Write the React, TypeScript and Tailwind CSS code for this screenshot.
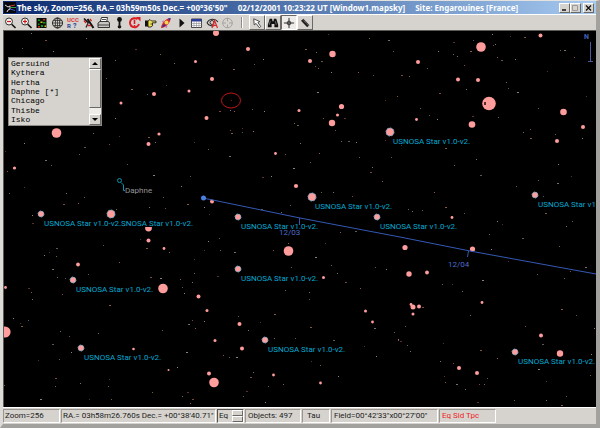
import type { ReactNode } from 'react';

const UI_FONT = "font-['Roboto','Liberation_Sans',sans-serif]";
const RAISED = 'border border-t-white border-l-white border-r-[#6b6966] border-b-[#6b6966]';

const asteroids = ['Gersuind', 'Kythera', 'Hertha', 'Daphne [*]', 'Chicago', 'Thisbe', 'Isko'];

// x, y, radius
const stars = [
  [216, 33, 3], [248, 49, 2], [332.5, 54, 3.2], [310, 61, 2], [195.5, 61.5, 1.5], [212, 79, 2],
  [189, 91, 1.5], [154, 94, 2], [121, 103, 1.5], [206.5, 118, 2], [299, 110.5, 1.5], [341.5, 106.5, 2.6],
  [337.5, 115, 1.5], [332, 123, 3.2], [481, 47, 4.8], [540.5, 35.5, 2], [418, 62, 2], [458, 79.5, 2],
  [478, 80, 2], [489, 103.5, 6.8], [472, 124.5, 3.3], [563.5, 112, 3.3], [583, 127, 2], [557, 141, 2],
  [416.5, 119.5, 1.4], [56.5, 133, 4.8], [14.5, 168, 1.6], [148.5, 144, 2], [159, 134, 1.6],
  [275.5, 153.5, 1.4], [296, 186, 2.1], [212, 201.5, 2], [148.5, 228, 3.4], [148.5, 240.5, 2],
  [164, 248.5, 1.4], [78, 264.5, 1.9], [163, 288.5, 4.8], [198.5, 296.5, 2], [5.5, 287.5, 1.4],
  [5, 332, 5.6], [133.5, 349, 1.3], [168.5, 370, 1], [288.5, 251, 4.8], [323.5, 277.5, 1.5],
  [207, 310.5, 1.5], [239.5, 324, 2], [365.5, 311, 1.5], [372.5, 322, 1.4], [215, 340.5, 1.5],
  [242, 348.5, 2], [209, 373.5, 2], [214, 382.5, 4.8], [273.5, 375, 1.4], [320.5, 383, 1.4],
  [452, 217.5, 1.4], [405, 247.5, 2.6], [472.5, 249, 2.6], [409, 274, 2.7], [427, 272.5, 1.9],
  [411, 304.5, 1.4], [413, 307, 2.5], [419, 306.5, 2], [413, 314, 1.5], [482, 302.5, 1.4],
  [541, 335.5, 2], [560, 353.5, 3.2], [459, 368, 2], [477, 373, 2],
];

const faint = [
  [31, 33], [45, 40], [86, 38], [22, 48], [53, 51], [135, 49], [160, 54], [115, 60], [106, 78], [131, 89],
  [147, 94], [115, 118], [119, 136], [148, 137], [155, 142], [109, 144], [93, 133], [84, 147], [24, 143],
  [5, 151], [79, 154], [45, 160], [51, 165], [7, 171], [127, 164], [153, 175], [24, 187], [9, 193], [66, 193],
  [63, 204], [78, 203], [84, 197], [32, 215], [32, 223], [116, 209], [149, 207], [165, 208], [187, 204],
  [163, 197], [181, 186], [140, 239], [146, 248], [169, 252], [103, 245], [119, 262], [56, 248], [44, 255],
  [49, 252], [56, 256], [52, 269], [88, 274], [57, 277], [65, 278], [160, 278], [194, 259], [194, 273],
  [192, 282], [150, 277], [180, 279], [182, 287], [184, 293], [28, 288], [31, 292], [32, 299], [62, 294],
  [109, 305], [28, 320], [13, 318], [20, 323], [21, 326], [60, 331], [69, 336], [98, 333], [52, 344],
  [71, 352], [38, 360], [59, 359], [188, 324], [192, 320], [195, 328], [162, 330], [186, 352], [109, 379],
  [108, 386], [80, 383], [55, 378], [55, 386], [4, 385], [177, 367], [187, 392], [152, 392], [174, 63],
  [221, 59], [233, 69], [254, 64], [263, 59], [166, 85], [305, 49], [316, 52], [315, 66], [318, 68],
  [321, 61], [331, 72], [328, 34], [369, 38], [388, 40], [393, 51], [358, 72], [373, 75], [317, 92],
  [385, 100], [397, 96], [230, 110], [219, 111], [234, 111], [252, 109], [264, 111], [344, 118], [323, 118],
  [294, 123], [230, 130], [231, 133], [242, 132], [253, 131], [242, 128], [297, 125], [300, 143],
  [335, 130], [341, 141], [348, 141], [356, 142], [194, 142], [208, 149], [229, 156], [285, 154],
  [319, 153], [310, 162], [293, 168], [385, 140], [359, 157], [372, 167], [370, 172], [382, 181],
  [190, 176], [271, 176], [262, 177], [321, 192], [333, 192], [352, 196], [345, 204], [290, 205],
  [204, 207], [209, 214], [261, 209], [281, 212], [219, 238], [340, 232], [355, 231], [208, 241],
  [204, 250], [220, 250], [234, 252], [273, 250], [288, 243], [291, 267], [315, 257], [325, 243],
  [331, 265], [337, 273], [345, 282], [360, 288], [375, 267], [386, 269], [217, 276], [285, 290],
  [309, 292], [309, 299], [274, 314], [238, 316], [204, 321], [260, 322], [310, 327], [248, 330],
  [295, 338], [274, 338], [333, 340], [376, 356], [364, 346], [394, 332], [374, 328], [398, 340],
  [223, 355], [229, 357], [236, 357], [311, 361], [320, 365], [253, 372], [250, 377], [283, 384],
  [268, 386], [338, 376], [246, 391], [408, 209], [412, 211], [422, 210], [445, 207], [464, 213],
  [497, 221], [502, 224], [545, 213], [566, 226], [572, 221], [489, 234], [522, 238], [491, 249],
  [508, 261], [559, 246], [585, 267], [570, 271], [564, 278], [537, 274], [482, 280], [452, 284],
  [442, 284], [462, 291], [422, 307], [470, 315], [405, 326], [398, 339], [400, 341], [407, 345],
  [410, 351], [525, 326], [561, 309], [576, 315], [594, 328], [443, 343], [480, 350], [440, 361],
  [453, 363], [497, 358], [542, 344], [591, 354], [444, 376], [445, 382], [456, 384], [479, 384],
  [484, 384], [487, 378], [538, 369], [546, 381], [590, 375], [465, 389], [401, 75], [409, 76],
  [427, 68], [438, 51], [453, 42], [453, 54], [457, 56], [464, 65], [470, 51], [473, 40], [492, 34],
  [510, 36], [524, 37], [495, 44], [493, 45], [497, 57], [501, 60], [515, 59], [547, 71], [560, 50],
  [564, 50], [574, 57], [506, 82], [508, 88], [517, 92], [586, 96], [538, 108], [466, 89], [439, 93],
  [420, 108], [429, 115], [437, 119], [472, 116], [498, 117], [523, 132], [530, 129], [530, 138],
  [555, 134], [582, 138], [401, 145], [445, 148], [476, 159], [391, 157], [454, 165], [480, 175],
  [558, 164], [571, 176], [538, 180], [557, 183], [516, 186], [434, 192], [543, 196], [40, 399],
  [89, 399], [111, 399], [182, 396], [192, 399], [190, 403], [243, 396], [265, 402], [477, 402],
  [514, 400], [546, 400], [566, 396], [561, 405],
];

const faintColors = ['#727272', '#7a4a42', '#8a5a4c', '#5a5a5a', '#94807a', '#5a3030', '#7a5e3a'];

// each label blanks the stars that lie under it
const catalogStars = [
  { x: 390, y: 132, r: 4 },
  { x: 535, y: 195, r: 3, label: 'USNOSA Star v1' },
  { x: 312, y: 197, r: 4 },
  { x: 377, y: 217, r: 3 },
  { x: 238, y: 217, r: 3 },
  { x: 111, y: 214, r: 4, label: 'SNOSA Star v1.0-v2.', labelX: 121 },
  { x: 41, y: 214, r: 3 },
  { x: 73, y: 280, r: 3 },
  { x: 81, y: 348, r: 3 },
  { x: 238, y: 269, r: 3 },
  { x: 265, y: 340, r: 3 },
  { x: 515, y: 352, r: 3 },
];

const Icon = ({ children }: { children: ReactNode }) => (
  <svg viewBox="0 0 15 14" className="block h-[14px] w-[15px]" fill="none" aria-hidden="true">
    {children}
  </svg>
);

const Magnifier = ({ plus = false }) => (
  <Icon>
    <circle cx="6" cy="5.5" r="3.5" fill="#f4f2ee" stroke="#333" />
    <path d="M8.7 8.2 12.5 12" stroke="#111" strokeWidth="1.6" />
    <path d={plus ? 'M4 5.5h4M6 3.5v4' : 'M4 5.5h4'} stroke="#d01818" strokeWidth="1.2" />
  </Icon>
);

const tools: { label: string; icon: ReactNode }[] = [
  { label: 'Zoom out', icon: <Magnifier /> },
  { label: 'Zoom in', icon: <Magnifier plus /> },
  {
    label: 'Image',
    icon: (
      <Icon>
        <path d="M2.5 2h10v10h-10z" fill="#0a0f06" />
        <path d="M4 3.5h2v1.5H4zM9 6h2.5v1.5H9zM7 9h2v2H7zM4 7.5h1.5V9H4z" fill="#0b9c1c" />
        <path d="M9 3h2v1.5H9zM4 10h2v1.5H4z" fill="#d02a12" />
        <path d="M6.5 5.5h2V7h-2zM10.5 9.5H12V11h-1.500z" fill="#d8c21e" />
      </Icon>
    ),
  },
  {
    label: 'Grid',
    icon: (
      <Icon>
        <circle cx="7.5" cy="7" r="5" stroke="#222" />
        <ellipse cx="7.5" cy="7" rx="2.2" ry="5" stroke="#222" strokeWidth=".8" />
        <path d="M2.5 7h10M7.5 2v10M3.5 4.5h8M3.5 9.5h8" stroke="#222" strokeWidth=".7" />
      </Icon>
    ),
  },
  {
    label: 'Catalogues',
    icon: (
      <Icon>
        <text x="2" y="6" fontSize="6" fontWeight="700" fill="#d83a3a" className={UI_FONT}>UCC</text>
        <text x="2" y="12" fontSize="6" fontWeight="700" fill="#26409c" className={UI_FONT}>R</text>
        <text x="8" y="12" fontSize="7" fontWeight="700" fill="#26409c" className={UI_FONT}>?</text>
      </Icon>
    ),
  },
  {
    label: 'Telescope',
    icon: (
      <Icon>
        <path d="M3 2.5 7 6.5" stroke="#111" strokeWidth="1.6" />
        <path d="M6.5 3 12.5 12" stroke="#111" strokeWidth="2" />
        <path d="M8 5 5 11.5" stroke="#222" strokeWidth="1.3" />
        <path d="M3 4.5 5 7M9 3l1.5 2M6.5 9.5H10" stroke="#d02020" strokeWidth="1.3" />
      </Icon>
    ),
  },
  {
    label: 'Print',
    icon: (
      <Icon>
        <path d="M4 6.5 5.5 1.5h6L10.5 6.5" fill="#fff" stroke="#222" strokeWidth=".9" />
        <path d="M2 7 4 5.5h8.500L13.5 7v4.5H2z" fill="#c8c6c2" stroke="#222" strokeWidth=".9" />
        <path d="M2 9h11M6 3.5h4" stroke="#222" strokeWidth=".8" />
      </Icon>
    ),
  },
  {
    label: 'Mark',
    icon: (
      <Icon>
        <circle cx="7.5" cy="3.5" r="2.4" fill="#111" />
        <path d="M7.5 5v4" stroke="#111" strokeWidth="1.8" />
        <circle cx="7.5" cy="10.7" r="1.8" fill="#111" />
      </Icon>
    ),
  },
  {
    label: 'Refresh',
    icon: (
      <Icon>
        <path d="M10.5 3.2A4.600 4.600 0 1 0 12 8" stroke="#dc1c24" strokeWidth="1.9" />
        <path d="M9 1h4.500v4.500z" fill="#dc1c24" />
        <path d="M7.5 3.5V8M7.5 9v1.8" stroke="#dc1c24" strokeWidth="1.6" />
      </Icon>
    ),
  },
  {
    label: 'Point',
    icon: (
      <Icon>
        <path d="M2 4.5h3v6H2z" fill="#111" />
        <path d="M5 5 7 3.5 8.5 5H13v1.8H9.500v3L8 11H5z" fill="#f0e04a" stroke="#222" strokeWidth=".9" />
        <path d="M7.5 8h2.500" stroke="#222" strokeWidth=".8" />
      </Icon>
    ),
  },
  {
    label: 'Launch',
    icon: (
      <Icon>
        <path d="M3 12C3 8 8 2 12.5 2 13 6 8 12 3 12z" fill="#d8282c" />
        <path d="M3.5 11.5 6 8l1.8 1.500z" fill="#2638a0" />
        <path d="M10 2.5 12.5 2 12 4.500z" fill="#2638a0" />
        <circle cx="8.5" cy="6.5" r="2" fill="#f2d84c" />
        <path d="M4 6 6 5M8 12 9 10" stroke="#c87ab8" strokeWidth="1.3" />
      </Icon>
    ),
  },
  { label: 'Run', icon: <Icon><path d="M5.5 2.5v9L10.5 7z" fill="#111" /></Icon> },
  {
    label: 'Table',
    icon: (
      <Icon>
        <path d="M2.5 3h10v8.500h-10z" fill="#fff" stroke="#333" strokeWidth=".9" />
        <path d="M2.5 3h10v2.500h-10z" fill="#2a3c9c" />
        <path d="M5 5v6.500M7.5 5v6.500M10 5v6.500M2.5 7.5h10M2.5 9.5h10" stroke="#8a8a90" strokeWidth=".6" />
      </Icon>
    ),
  },
  {
    label: 'Visibility',
    icon: (
      <Icon>
        <path d="M2 7C4 2.5 10 2 13 6M2 7c2 3 6 3.5 8 2" stroke="#222" strokeWidth="1.1" />
        <circle cx="7" cy="6.5" r="2" stroke="#333" />
        <path d="M7 12 9.5 4.5 12.5 12M8 9.5h4" stroke="#dc2828" strokeWidth="1.2" />
      </Icon>
    ),
  },
  {
    label: 'Center',
    icon: (
      <Icon>
        <circle cx="7.5" cy="7" r="4.8" stroke="#a5a3a0" />
        <path d="M7.5 2v3.500M7.5 8.5V12M2.5 7H6M9 7h3.500" stroke="#a5a3a0" />
      </Icon>
    ),
  },
];

const modes: { label: string; pressed?: boolean; icon: ReactNode }[] = [
  {
    label: 'Select',
    icon: (
      <Icon>
        <path d="M4 2.5 4.5 9 6.5 7.5 10 12 11.5 10.8 8.5 6.5 10.5 5.500z" fill="#fff" stroke="#333" strokeWidth=".9" />
      </Icon>
    ),
  },
  {
    label: 'Find',
    icon: (
      <Icon>
        <path d="M4 2.5h2.500L7 5h1l.5-2.500H11L13 9v2.500H9V8H6v3.500H2V9z" fill="#111" />
        <path d="M4.5 5 3.5 9M10 5l1 4" stroke="#aaa" strokeWidth=".6" />
      </Icon>
    ),
  },
  {
    label: 'Crosshair',
    pressed: true,
    icon: (
      <Icon>
        <path d="M7.5 1.5v11M2 7h11" stroke="#222" strokeWidth="1" />
        <circle cx="7.5" cy="7" r="2" stroke="#222" strokeWidth=".9" />
      </Icon>
    ),
  },
  {
    label: 'Measure',
    icon: (
      <Icon>
        <path d="M4.5 3.5 11 10.5" stroke="#222" strokeWidth="3.4" />
        <path d="M5.5 3.5 11.5 10" stroke="#aaa" strokeWidth=".9" strokeDasharray="1 1" />
      </Icon>
    ),
  },
];

const Sky = () => (
  <svg viewBox="4 31 592 376" className={`block h-auto w-full bg-black ${UI_FONT}`} role="img" aria-label="Sky map">
    {faint.map(([x, y], i) => (
      <rect key={i} x={x} y={y} width={i % 4 === 1 ? 2 : 1} height="1" fill={faintColors[i % faintColors.length]} />
    ))}
    {stars.map(([x, y, r], i) => (
      <circle key={i} cx={x} cy={y} r={r} fill="#ff9c9c" />
    ))}
    <path d="M484 102h2v3h-2z" fill="#5a2a2a" />
    {catalogStars.map(({ x, y, r, label = 'USNOSA Star v1.0-v2.', labelX = x + 3 }, i) => (
      <g key={i}>
        <rect x={x + 3} y={y + 5} width="74" height="8" fill="#000" />
        <circle cx={x} cy={y} r={r} fill="#ff9c9c" />
        <circle cx={x} cy={y} r={r} stroke="#62a8c8" strokeDasharray="2 1" fill="none" />
        <text x={labelX} y={y + 12} fontSize="8" fill="#06a8d0">{label}</text>
      </g>
    ))}
    <polyline points="203,198 300,218 400,237 470,251 596,274" stroke="#3558b4" fill="none" />
    <path d="M299.5 218v7M468.5 251l-1 6" stroke="#3558b4" />
    <circle cx="203.5" cy="198" r="2.5" fill="#4a80e0" />
    <text x="279" y="235" fontSize="8" fill="#4c6ccc">12/03</text>
    <text x="448" y="267" fontSize="8" fill="#4c6ccc">12/04</text>
    <ellipse cx="231" cy="100.5" rx="9.5" ry="7.5" stroke="#c41414" fill="none" />
    <rect x="231" y="100" width="1" height="1" fill="#8a1010" />
    <circle cx="119.5" cy="180.5" r="2" stroke="#0896ac" fill="none" />
    <path d="M121 182.5 123.5 185v5.500h1.500" stroke="#0896ac" fill="none" />
    <text x="125" y="193" fontSize="8" fill="#969696">Daphne</text>
    <text x="584" y="39" fontSize="7" fontWeight="700" fill="#4460b8">N</text>
    <path d="M590.5 42v20M588 61.5h5" stroke="#4c5a9c" fill="none" />
  </svg>
);

const ObjectList = () => (
  <div className="absolute top-[26px] left-1 flex h-[69px] w-[94px] border border-[#8c8a86] bg-[#d6d3ce]">
    <ul className="flex min-w-0 flex-1 flex-col justify-between overflow-hidden pt-px pb-px pl-0.5" role="listbox" aria-label="Objects">
      {asteroids.map((name) => (
        <li key={name} role="presentation" className="h-[9px]">
          <button
            role="option"
            aria-selected={name === 'Daphne [*]'}
            className="block w-full text-left font-['Liberation_Mono',monospace] text-[8px] leading-[9px] text-black"
          >
            {name}
          </button>
        </li>
      ))}
    </ul>
    <div className="flex w-3 flex-col bg-[#efedea]">
      <button aria-label="Scroll up" className={`flex h-[11px] items-center justify-center bg-[#d6d3ce] ${RAISED}`}>
        <svg viewBox="0 0 6 3" className="h-[3px] w-[6px]"><path d="M0 3h6L3 0z" /></svg>
      </button>
      <div className={`h-[39px] bg-[#d6d3ce] ${RAISED}`} />
      <button aria-label="Scroll down" className={`mt-auto flex h-[11px] items-center justify-center bg-[#d6d3ce] ${RAISED}`}>
        <svg viewBox="0 0 6 3" className="h-[3px] w-[6px]"><path d="M0 0h6L3 3z" /></svg>
      </button>
    </div>
  </div>
);

const StatusCell = ({ width, className = '', children }: { width: string; className?: string; children: ReactNode }) => (
  <div className={`h-[14px] shrink-0 overflow-hidden border border-t-[#99968f] border-l-[#99968f] border-r-white border-b-white whitespace-nowrap ${width} ${className}`}>
    {children}
  </div>
);

const StatusBar = () => (
  <footer className={`flex h-[17px] items-center gap-px border-t border-white bg-[#d6d3ce] text-[8px] leading-[12px] text-[#1c1c1c] ${UI_FONT}`}>
    <StatusCell width="w-[57px]" className="pl-px">Zoom=256</StatusCell>
    <StatusCell width="w-[155px]" className="pl-px">RA.= 03h58m26.760s Dec.= +00°38'40.71"</StatusCell>
    <div className="flex h-[14px] w-[27px] shrink-0 border border-t-[#55534f] border-l-[#55534f] border-r-white border-b-white">
      <input aria-label="Coordinate system" defaultValue="Eq" className="w-[14px] bg-transparent pl-px outline-none" />
      <div className="flex flex-1 flex-col">
        <button aria-label="Next" className={`h-[6px] ${RAISED}`} />
        <button aria-label="Previous" className={`h-[6px] ${RAISED}`} />
      </div>
    </div>
    <StatusCell width="w-[56px]" className="pl-0.5">Objects: 497</StatusCell>
    <StatusCell width="w-[28px]" className="pl-1">Tau</StatusCell>
    <StatusCell width="w-[107px]" className="pl-0.5">Field=00°42'33"x00°27'00"</StatusCell>
    <StatusCell width="w-[57px]" className="pl-0.5 text-[#f01c24]">Eq Sid Tpc</StatusCell>
  </footer>
);

const App = () => {
  return (
    <main className="w-full border-t border-r-4 border-b-4 border-l-[3px] border-t-[#e4e2de] border-r-[#a3a19d] border-b-[#a3a19d] border-l-[#dddbd7] bg-[#d6d3ce]">
      <header className="flex h-[13px] items-center bg-linear-to-r from-[#0c2a70] to-[#a6caf0] pr-0.5 pl-px text-white">
        <svg viewBox="0 0 12 11" className="mr-px h-[11px] w-3 shrink-0" fill="none" aria-hidden="true">
          <path d="M0 0h12v11H0z" fill="#05070c" />
          <path d="M1 3l3 2 2-1v3L4 8 3 10" stroke="#ddd" />
          <path d="M6 4l5-1" stroke="#c43a2c" />
          <path d="M6 5.5h6" stroke="#39a048" />
          <path d="M6 7l5 1.500" stroke="#3458d8" />
        </svg>
        <h1 className="flex min-w-0 flex-1 gap-2.5 overflow-hidden font-['Noto_Sans','Open_Sans',sans-serif] text-[8px] leading-[13px] font-bold whitespace-nowrap">
          <span>The sky, Zoom=256, RA.= 03h59m50s Dec.= +00°36'50"</span>
          <span>02/12/2001 10:23:22 UT [Window1.mapsky]</span>
          <span>Site: Engarouines [France]</span>
        </h1>
        <div className="flex shrink-0 text-black">
          <button aria-label="Minimize" className={`h-[10px] w-[11px] bg-[#d6d3ce] ${RAISED}`}>
            <svg viewBox="0 0 9 8" className="h-2 w-[9px]" stroke="#111"><path d="M2 6h4" strokeWidth="1.5" /></svg>
          </button>
          <button aria-label="Maximize" disabled className={`h-[10px] w-[11px] bg-[#d6d3ce] ${RAISED}`}>
            <svg viewBox="0 0 9 8" className="h-2 w-[9px]" fill="none" stroke="#9b9995"><path d="M1.5 1.5h5v5h-5z" /></svg>
          </button>
          <button aria-label="Close" className={`ml-0.5 h-[10px] w-[11px] bg-[#d6d3ce] ${RAISED}`}>
            <svg viewBox="0 0 9 8" className="h-2 w-[9px]" stroke="#111"><path d="M2 1.5l5 5M7 1.5l-5 5" strokeWidth="1.3" /></svg>
          </button>
        </div>
      </header>

      <nav className="flex h-4 items-center border-t border-white" aria-label="Tools">
        <div className="flex w-[232px] shrink-0 justify-between">
          {tools.map((tool) => (
            <button key={tool.label} aria-label={tool.label} disabled={tool.label === 'Center'}>
              {tool.icon}
            </button>
          ))}
        </div>
        <div className="mx-[6px] h-[11px] w-0.5 border-l border-l-[#8f8d89] bg-white" />
        {modes.map((mode) => (
          <button
            key={mode.label}
            aria-label={mode.label}
            aria-pressed={!!mode.pressed}
            className={`flex h-[15px] w-4 items-center justify-center overflow-hidden ${
              mode.pressed ? 'border border-t-[#6b6966] border-l-[#6b6966] border-r-white border-b-white bg-[#eeece8]' : RAISED
            }`}
          >
            {mode.icon}
          </button>
        ))}
      </nav>

      <section className="relative border-t border-l border-[#5c5a57]">
        <Sky />
        <ObjectList />
      </section>

      <StatusBar />
    </main>
  );
};

export default App;
